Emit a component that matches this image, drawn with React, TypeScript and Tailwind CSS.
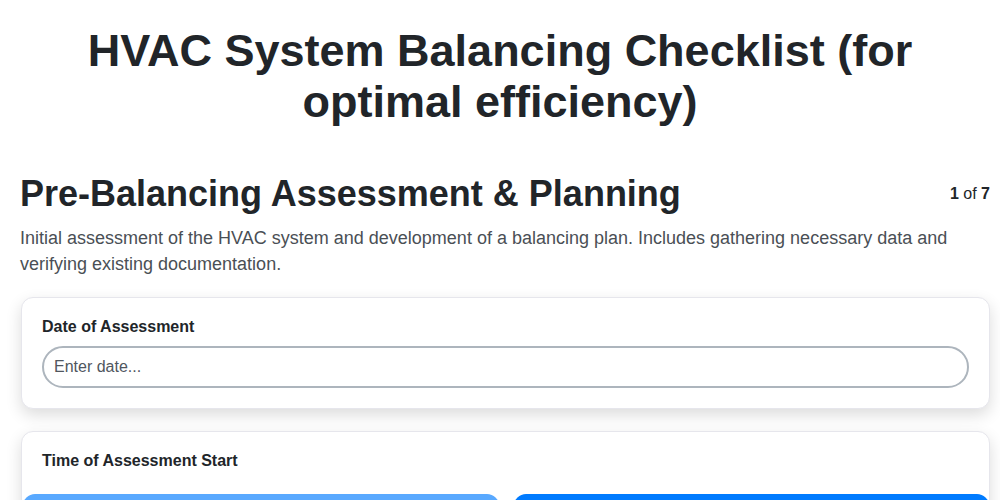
import React from "react";

const font = { fontFamily: '"Liberation Sans", Arial, sans-serif' };

function FieldCard({ label, children }: { label: string; children?: React.ReactNode }) {
  return (
    <div className="rounded-xl border border-[#e6e6ec] bg-white p-5 shadow-[0_6px_16px_rgba(0,0,0,0.14)]">
      <label className="mb-2.5 block text-[16px] font-bold leading-[18px] text-[#212529]">{label}</label>
      {children}
    </div>
  );
}

export default function App() {
  return (
    <div className="min-h-screen bg-white text-[#212529]" style={font}>
      <h1 className="px-5 pt-[25px] text-center text-[45px] font-bold leading-[51px]">
        HVAC System Balancing Checklist (for optimal efficiency)
      </h1>

      <div className="pl-5 pr-[10px] pt-[45px]">
        <div className="flex items-center justify-between">
          <h2 className="text-[36px] font-bold leading-[43px]">Pre-Balancing Assessment &amp; Planning</h2>
          <div className="text-[16px] leading-6 text-[#212529]">
            <span className="font-bold">1</span> of <span className="font-bold">7</span>
          </div>
        </div>
        <p className="mt-2.5 text-[18px] leading-[26px] text-[#4a4f55]">
          Initial assessment of the HVAC system and development of a balancing plan. Includes gathering necessary data and
          verifying existing documentation.
        </p>

        <div className="mt-[20px] flex flex-col gap-[22px] pl-px">
          <FieldCard label="Date of Assessment">
            <input
              type="text"
              placeholder="Enter date..."
              className="block h-[42px] w-full rounded-full border-2 border-[#adb5bd] bg-white pl-[10px] pr-3 text-[16px] text-[#212529] outline-none placeholder:text-[#50565e]"
              style={font}
            />
          </FieldCard>

          <FieldCard label="Time of Assessment Start">
            <div className="-mx-5 mt-6 flex gap-[15px] pl-px">
              <button className="h-12 flex-1 rounded-xl bg-[#59a9ff] text-[16px] font-bold text-white">Previous</button>
              <button className="h-12 flex-1 rounded-xl bg-[#007bff] text-[16px] font-bold text-white">Next</button>
            </div>
          </FieldCard>
        </div>
      </div>
    </div>
  );
}
